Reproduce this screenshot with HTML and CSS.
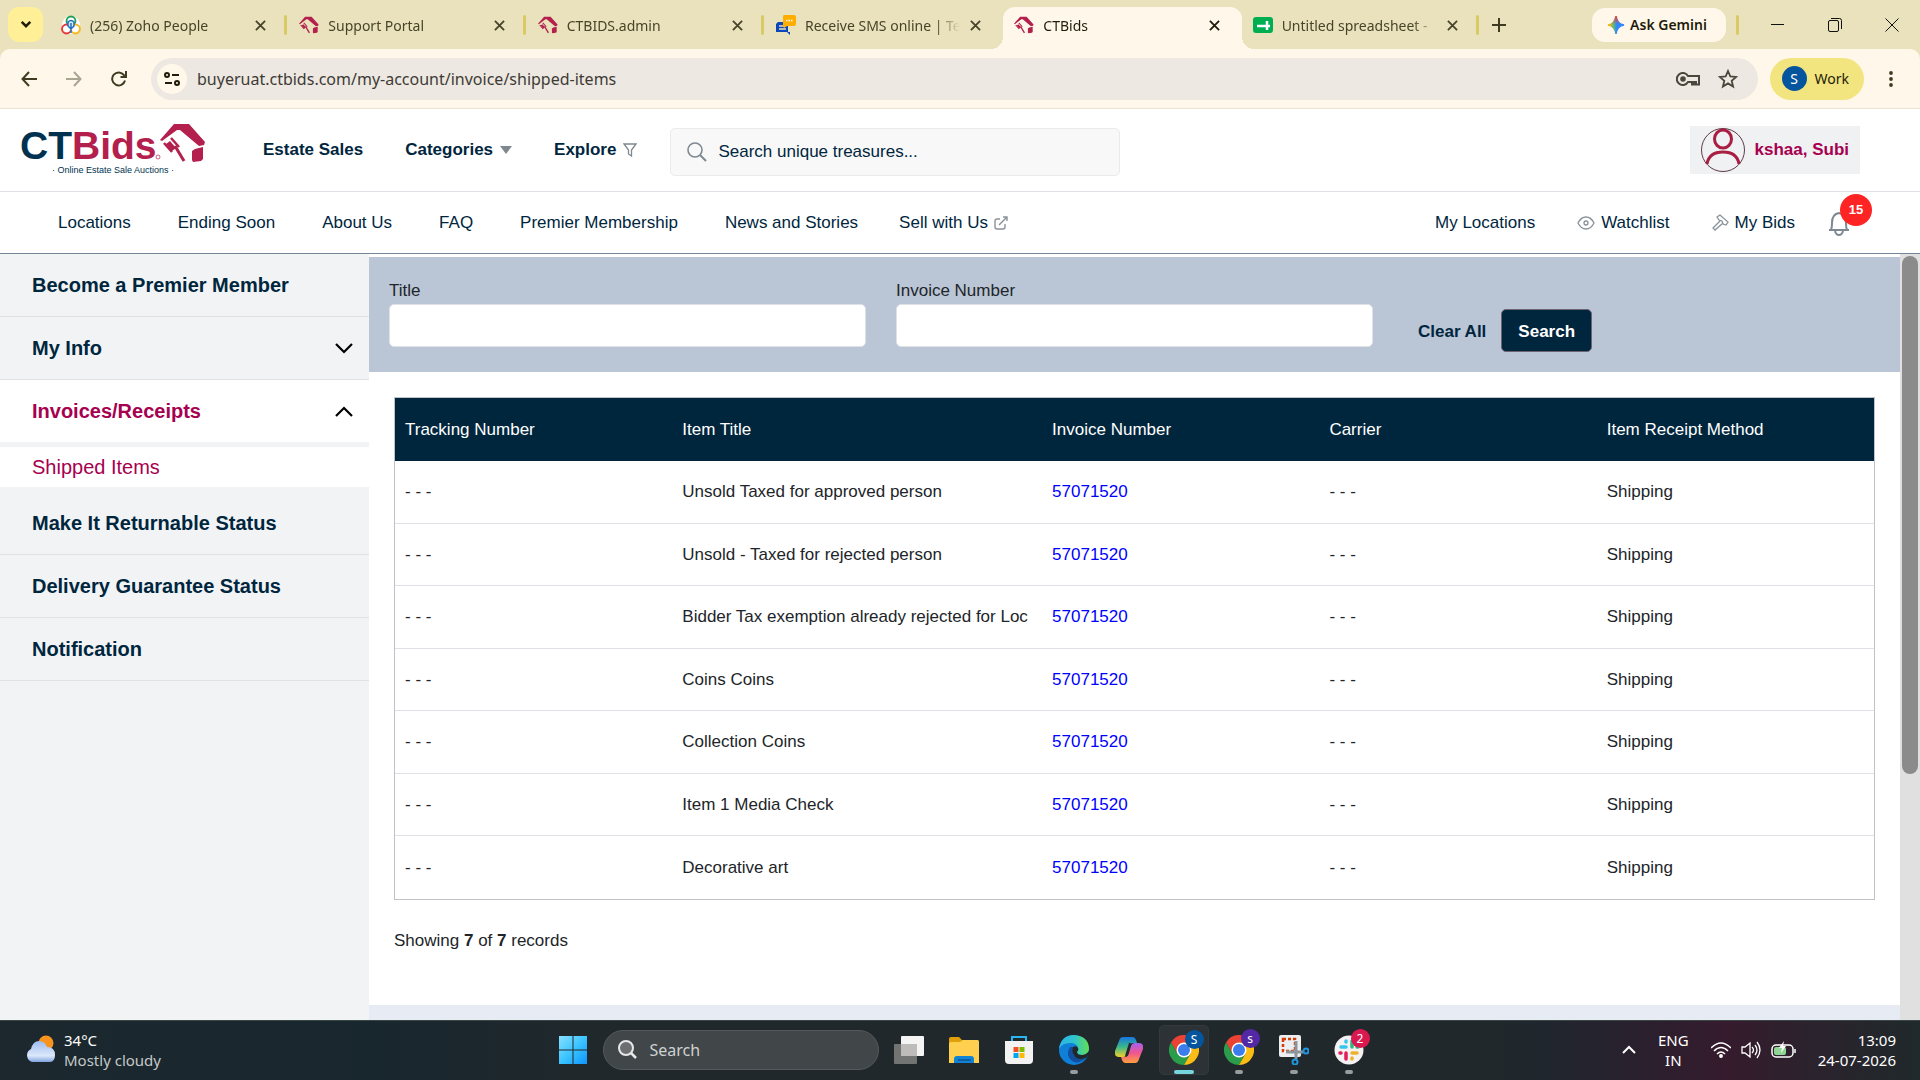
FILE: index.html
```html
<!DOCTYPE html>
<html lang="en">
<head>
    <meta charset="UTF-8">
    <title>CTBids</title>
    <link rel="stylesheet" href="styles.css">
</head>
<body>
<svg class="defs" width="0" height="0">
    <defs>
        <symbol id="house" viewBox="0 0 46 38">
            <path d="M14 0H29L45 18 44 21 39 22 20 6 17 6 2 17 0 16Z" fill="#b3204d"/>
            <path d="M32 27l3-2 8-2v12l-2 2-8 1-1-2Z" fill="#b3204d"/>
            <path d="M11 14l8 9M4 19l8 9" stroke="#b3204d" stroke-width="2.500" fill="none"/>
            <path d="M10 17l6 7-4 3-6-7Z" fill="#b3204d"/>
            <path d="M15 22l9 15" stroke="#b3204d" stroke-width="3" fill="none"/>
        </symbol>
        <symbol id="close" viewBox="0 0 12 12">
            <path d="M1 1l10 10M11 1L1 11" stroke="currentColor" stroke-width="2" fill="none"/>
        </symbol>
        <symbol id="chrome" viewBox="0 0 30 30">
            <path d="M2 7.500A15 15 0 0 1 28 7.500H15L8.500 18.800Z" fill="#ea4335"/>
            <path d="M2 7.500A15 15 0 0 0 15 30L21.500 18.800H8.500Z" fill="#2a9d4a"/>
            <path d="M28 7.500A15 15 0 0 1 15 30L21.500 18.800 15 7.500Z" fill="#fbbc14"/>
            <circle cx="15" cy="15" r="7.500" fill="#fff"/>
            <circle cx="15" cy="15" r="6" fill="#3b7ded"/>
        </symbol>
    </defs>
</svg>

<!-- browser -->
<div class="tabstrip">
    <button class="tab-search" aria-label="Search tabs">
        <svg width="12" height="9" viewBox="0 0 14 10"><path d="M2 2l5 5 5-5" stroke="#1f1c0a" stroke-width="3" fill="none"/></svg>
    </button>
    <div class="tabs">
        <div class="tab">
            <svg class="favicon" viewBox="0 0 20 20">
                <circle cx="10" cy="10" r="9" fill="#fff"/>
                <circle cx="10" cy="6" r="4.500" fill="none" stroke="#1fa05a" stroke-width="1.800"/>
                <circle cx="5.500" cy="14" r="4.500" fill="none" stroke="#e5343d" stroke-width="1.800"/>
                <circle cx="14.500" cy="14" r="4.500" fill="none" stroke="#f5b91c" stroke-width="1.800"/>
                <path d="M7 7q3-3 6 0v4l-3 3-3-3ZM10 8v10" fill="#d6e9fb" stroke="#1f6fc0" stroke-width="1.500"/>
            </svg>
            <span class="tab-title">(256) Zoho People</span>
            <button class="tab-close" aria-label="Close"><svg><use href="#close"/></svg></button>
        </div>
        <div class="tab">
            <svg class="favicon"><use href="#house"/></svg>
            <span class="tab-title">Support Portal</span>
            <button class="tab-close" aria-label="Close"><svg><use href="#close"/></svg></button>
        </div>
        <div class="tab">
            <svg class="favicon"><use href="#house"/></svg>
            <span class="tab-title">CTBIDS.admin</span>
            <button class="tab-close" aria-label="Close"><svg><use href="#close"/></svg></button>
        </div>
        <div class="tab no-line">
            <svg class="favicon" viewBox="0 0 20 20">
                <path d="M2 7h10v10h2v3l-3-3H0V9Z" fill="#0b47b8"/>
                <path d="M3 11h7M3 14h7" stroke="#e9e1bb" stroke-width="1.300"/>
                <path d="M8 0h10q2 0 2 2v7q0 2-2 2h-7l-3 2-1-2V2Q7 0 8 0Z" fill="#ffae00"/>
                <path d="M10 5.500h7" stroke="#fff" stroke-width="1.300" stroke-dasharray="1.500 1"/>
            </svg>
            <span class="tab-title">Receive SMS online | Te</span>
            <button class="tab-close" aria-label="Close"><svg><use href="#close"/></svg></button>
        </div>
        <div class="tab active">
            <svg class="favicon"><use href="#house"/></svg>
            <span class="tab-title">CTBids</span>
            <button class="tab-close" aria-label="Close"><svg><use href="#close"/></svg></button>
        </div>
        <div class="tab">
            <svg class="favicon" viewBox="0 0 20 20">
                <rect y="2" width="20" height="16" rx="3" fill="#00ae52"/>
                <path d="M4 11h13M14 6v9" stroke="#fff" stroke-width="2.500"/>
            </svg>
            <span class="tab-title">Untitled spreadsheet -</span>
            <button class="tab-close" aria-label="Close"><svg><use href="#close"/></svg></button>
        </div>
    </div>
    <button class="new-tab" aria-label="New tab">
        <svg width="14" height="14" viewBox="0 0 14 14"><path d="M7 0v14M0 7h14" stroke="#3f3c22" stroke-width="2"/></svg>
    </button>
    <button class="gemini">
        <svg width="18" height="20" viewBox="0 0 18 20">
            <defs>
                <linearGradient id="gem" x1="0" y1="0" x2="1" y2="0">
                    <stop offset=".1" stop-color="#f5b51d"/><stop offset=".35" stop-color="#5bb974"/><stop offset=".55" stop-color="#3186ff"/>
                </linearGradient>
                <linearGradient id="gem2" x1="0" y1="0" x2="0" y2="1">
                    <stop offset="0" stop-color="#f0433b"/><stop offset=".45" stop-color="#f0433b" stop-opacity="0"/>
                </linearGradient>
            </defs>
            <path d="M9 1Q10 9 17 10 10 11 9 19 8 11 1 10 8 9 9 1Z" fill="url(#gem)" stroke="url(#gem)" stroke-width="1.500"/>
            <path d="M9 1Q10 9 17 10 10 11 9 19 8 11 1 10 8 9 9 1Z" fill="url(#gem2)" stroke="url(#gem2)" stroke-width="1.500"/>
        </svg>
        Ask Gemini
    </button>
    <span class="strip-line"></span>
    <div class="win-buttons">
        <button aria-label="Minimize"><svg width="14" height="14" viewBox="0 0 14 14"><path d="M0 6.500h13" stroke="#111"/></svg></button>
        <button aria-label="Restore"><svg width="14" height="14" viewBox="0 0 14 14"><rect x=".5" y="2.500" width="10" height="11" rx="1.500" fill="none" stroke="#111"/><path d="M3 .5h8.500q2 0 2 2V11" fill="none" stroke="#111"/></svg></button>
        <button aria-label="Close window"><svg width="14" height="14" viewBox="0 0 14 14"><path d="M.5 .5l13 13M13.500 .5l-13 13" stroke="#111"/></svg></button>
    </div>
</div>
<div class="toolbar-wrap">
    <div class="toolbar">
        <button class="tool" aria-label="Back"><svg width="16" height="16" viewBox="0 0 16 16"><path d="M16 8H2M8 1L1.500 8 8 15" stroke="#3f3c22" stroke-width="2" fill="none"/></svg></button>
        <button class="tool" aria-label="Forward"><svg width="16" height="16" viewBox="0 0 16 16"><path d="M0 8h14M8 1l6.500 7L8 15" stroke="#a9a593" stroke-width="2" fill="none"/></svg></button>
        <button class="tool" aria-label="Reload"><svg width="16" height="16" viewBox="0 0 16 16"><path d="M14 9.500A6.500 6.500 0 1 1 13 4.200L15 6M15 0v6H9.500" stroke="#3f3c22" stroke-width="2" fill="none"/></svg></button>
        <div class="address">
            <button class="site-info" aria-label="Site information">
                <svg width="16" height="16" viewBox="0 0 16 16" fill="none" stroke="#1f1c0a" stroke-width="2"><circle cx="3" cy="4" r="2"/><path d="M8 4h7M1 12h7"/><circle cx="13" cy="12" r="2"/></svg>
            </button>
            <input class="url" type="text" aria-label="Address" value="buyeruat.ctbids.com/my-account/invoice/shipped-items">
            <button class="addr-btn" aria-label="Passwords">
                <svg width="24" height="14" viewBox="0 0 24 14" fill="none" stroke="#4a473c" stroke-width="2"><path d="M12 4a6 6 0 1 0 0 6h4v2.500h2V10h2v2.500h3V4Z"/><circle cx="7" cy="7" r="1.800" fill="#4a473c"/></svg>
            </button>
            <button class="addr-btn" aria-label="Bookmark">
                <svg width="20" height="20" viewBox="0 0 20 20"><path d="M10 2l2.300 5.400 5.900.5-4.500 3.900 1.400 5.700L10 14.400l-5.100 3.100 1.400-5.700L1.800 7.900l5.900-.5Z" fill="none" stroke="#4a473c" stroke-width="1.800"/></svg>
            </button>
        </div>
        <button class="profile"><span class="profile-pic">S</span>Work</button>
        <button class="tool menu" aria-label="Menu"><svg width="4" height="16" viewBox="0 0 4 16" fill="#3f3c22"><circle cx="2" cy="2" r="1.900"/><circle cx="2" cy="8" r="1.900"/><circle cx="2" cy="14" r="1.900"/></svg></button>
    </div>
</div>

<!-- site header -->
<header class="header">
    <a class="logo" href="#" aria-label="CTBids">
        <svg width="190" height="56" viewBox="0 0 190 56">
            <text class="logo-name" x="-1" y="37" fill="#00324f">CT</text>
            <text class="logo-name" x="51" y="37" fill="#b3204d">Bids</text>
            <circle cx="137" cy="35" r="2" fill="none" stroke="#b3204d" stroke-width=".7"/>
            <text class="logo-tag" x="92" y="51" text-anchor="middle" fill="#00324f">· Online Estate Sale Auctions ·</text>
            <use href="#house" x="139" y="2" width="46" height="38"/>
        </svg>
    </a>
    <nav class="main-nav">
        <a href="#">Estate Sales</a>
        <a href="#">Categories <svg width="12" height="8" viewBox="0 0 12 8"><path d="M0 0h12L6 8Z" fill="#7f8890"/></svg></a>
        <a href="#">Explore <svg width="14" height="14" viewBox="0 0 14 14"><path d="M1 1h12L8.500 7v6L5.500 11V7Z" fill="none" stroke="#7f8890" stroke-width="1.300"/></svg></a>
    </nav>
    <label class="site-search">
        <svg width="20" height="20" viewBox="0 0 20 20"><circle cx="8" cy="8" r="7" fill="none" stroke="#7f8890" stroke-width="1.600"/><path d="M13 13l6 6" stroke="#7f8890" stroke-width="2"/></svg>
        <input type="text" placeholder="Search unique treasures..." aria-label="Search unique treasures">
    </label>
    <button class="user">
        <svg width="44" height="44" viewBox="0 0 44 44">
            <circle cx="22" cy="22" r="21.500" fill="none" stroke="#5f3a48"/>
            <ellipse cx="22" cy="11" rx="8.500" ry="9" fill="none" stroke="#a91f43" stroke-width="3"/>
            <path d="M6 36Q8 24 22 24T38 36" fill="none" stroke="#a91f43" stroke-width="3"/>
        </svg>
        kshaa, Subi
    </button>
</header>
<nav class="sub-nav">
    <div class="sub-left">
        <a href="#">Locations</a>
        <a href="#">Ending Soon</a>
        <a href="#">About Us</a>
        <a href="#">FAQ</a>
        <a href="#">Premier Membership</a>
        <a href="#">News and Stories</a>
        <a class="sell" href="#">Sell with Us <svg width="14" height="14" viewBox="0 0 14 14" fill="none" stroke="#8a9299" stroke-width="1.400"><path d="M6 3H3Q1 3 1 5v6q0 2 2 2h6q2 0 2-2V8M5 9l8-8M9 1h4v4"/></svg></a>
    </div>
    <div class="sub-right">
        <a href="#">My Locations</a>
        <a href="#"><svg width="18" height="14" viewBox="0 0 18 14" fill="none" stroke="#8a9299" stroke-width="1.300"><path d="M1 7q3-6 8-6t8 6q-3 6-8 6T1 7Z"/><circle cx="9" cy="7" r="2"/></svg>Watchlist</a>
        <a class="bids" href="#"><svg width="17" height="17" viewBox="0 0 17 17" fill="none" stroke="#8a9299" stroke-width="1.300"><path d="M5 3l3-2 8 7-2 3-3-1-1-3-3-1ZM8 7l-7 7 2 2 8-7"/></svg>My Bids</a>
        <a class="bell" href="#" aria-label="Notifications">
            <svg width="22" height="26" viewBox="0 0 22 26" fill="none" stroke="#7f8890" stroke-width="2"><path d="M1 20h20M3 20q1-2 1-7 0-9 7-10 7 1 7 10 0 5 1 7M7 21q1 4 4 4t4-4"/></svg>
            <span class="badge">15</span>
        </a>
    </div>
</nav>

<div class="page">
    <aside class="sidebar">
        <a class="side-item" href="#">Become a Premier Member</a>
        <a class="side-item" href="#">My Info <svg width="18" height="11" viewBox="0 0 18 11"><path d="M1 1l8 8 8-8" stroke="#000" stroke-width="2.200" fill="none"/></svg></a>
        <a class="side-item open" href="#">Invoices/Receipts <svg width="18" height="11" viewBox="0 0 18 11"><path d="M1 10l8-8 8 8" stroke="#000" stroke-width="2.200" fill="none"/></svg></a>
        <a class="side-sub" href="#">Shipped Items</a>
        <a class="side-item" href="#">Make It Returnable Status</a>
        <a class="side-item" href="#">Delivery Guarantee Status</a>
        <a class="side-item" href="#">Notification</a>
    </aside>
    <main class="content">
        <form class="filter">
            <div class="field">
                <label for="title">Title</label>
                <input type="text" id="title">
            </div>
            <div class="field">
                <label for="invoice">Invoice Number</label>
                <input type="text" id="invoice">
            </div>
            <div class="actions">
                <button type="reset" class="clear">Clear All</button>
                <button type="button" class="search">Search</button>
            </div>
        </form>
        <div class="results">
            <table class="items">
                <thead>
                <tr><th>Tracking Number</th><th class="wide">Item Title</th><th>Invoice Number</th><th>Carrier</th><th>Item Receipt Method</th></tr>
                </thead>
                <tbody>
                <tr><td>- - -</td><td>Unsold Taxed for approved person</td><td><a href="#">57071520</a></td><td>- - -</td><td>Shipping</td></tr>
                <tr><td>- - -</td><td>Unsold - Taxed for rejected person</td><td><a href="#">57071520</a></td><td>- - -</td><td>Shipping</td></tr>
                <tr><td>- - -</td><td>Bidder Tax exemption already rejected for Loc</td><td><a href="#">57071520</a></td><td>- - -</td><td>Shipping</td></tr>
                <tr><td>- - -</td><td>Coins Coins</td><td><a href="#">57071520</a></td><td>- - -</td><td>Shipping</td></tr>
                <tr><td>- - -</td><td>Collection Coins</td><td><a href="#">57071520</a></td><td>- - -</td><td>Shipping</td></tr>
                <tr><td>- - -</td><td>Item 1 Media Check</td><td><a href="#">57071520</a></td><td>- - -</td><td>Shipping</td></tr>
                <tr><td>- - -</td><td>Decorative art</td><td><a href="#">57071520</a></td><td>- - -</td><td>Shipping</td></tr>
                </tbody>
            </table>
            <p class="count">Showing <b>7</b> of <b>7</b> records</p>
        </div>
        <div class="footer-edge"></div>
    </main>
    <div class="scrollbar"><div class="thumb"></div></div>
</div>

<!-- taskbar -->
<footer class="taskbar">
    <button class="weather">
        <svg width="30" height="30" viewBox="0 0 30 30">
            <defs><linearGradient id="cloud" x1="0" y1="0" x2="0" y2="1"><stop offset="0" stop-color="#9dbcf0"/><stop offset=".7" stop-color="#dce8fa"/><stop offset="1" stop-color="#7ea2e0"/></linearGradient></defs>
            <circle cx="21" cy="8" r="7.500" fill="#f7931e"/>
            <path d="M7 27a7 7 0 0 1-1-13Q8 6 14 6q6 0 8 6 8 0 8 8t-7 7Z" fill="url(#cloud)"/>
        </svg>
        <span class="weather-text"><span>34°C</span><span class="dim">Mostly cloudy</span></span>
    </button>
    <div class="apps">
        <button class="app" aria-label="Start">
            <svg width="30" height="30" viewBox="0 0 30 30">
                <defs><linearGradient id="win" x1="0" y1="0" x2="30" y2="30" gradientUnits="userSpaceOnUse"><stop offset="0" stop-color="#8ce3ff"/><stop offset=".5" stop-color="#3cc4ff"/><stop offset="1" stop-color="#0a92fb"/></linearGradient></defs>
                <path d="M1 1h13.500v13.500H1ZM15.500 1H29v13.500H15.500ZM1 15.500h13.500V29H1ZM15.500 15.500H29V29H15.500Z" fill="url(#win)"/>
            </svg>
        </button>
        <label class="task-search">
            <svg width="19" height="19" viewBox="0 0 19 19"><circle cx="8" cy="8" r="7" fill="#6b6f72" stroke="#e8e8e8" stroke-width="2"/><path d="M13 13l5 5" stroke="#e8e8e8" stroke-width="2.500"/></svg>
            <input type="text" placeholder="Search" aria-label="Search Windows">
        </label>
        <button class="app" aria-label="Task view">
            <svg width="30" height="30" viewBox="0 0 30 30"><rect x="7" y="1" width="23" height="20" rx="1" fill="#f4f4f4"/><rect y="9" width="23" height="20" rx="1" fill="#8d8c8b" opacity=".75"/><path d="M7 9h16v12H7Z" fill="#bdbcbb"/></svg>
        </button>
        <button class="app" aria-label="File Explorer">
            <svg width="30" height="30" viewBox="0 0 30 30">
                <path d="M0 4q0-2 2-2h8l3 3h15q2 0 2 2v6H0Z" fill="#e0a00c"/>
                <path d="M0 9q0-2 2-2h9l3-2h14q2 0 2 2v21H0Z" fill="#ffd04f"/>
                <path d="M5 28v-4q0-3 3-3h14q3 0 3 3v4Z" fill="#1182d4"/><path d="M9 25h13" stroke="#0a5596" stroke-width="1.500"/>
            </svg>
        </button>
        <button class="app" aria-label="Microsoft Store">
            <svg width="30" height="30" viewBox="0 0 30 30">
                <path d="M8 6V2h14v4" fill="none" stroke="#28b5f0" stroke-width="2"/>
                <path d="M1 6h28v19q0 4-4 4H5q-4 0-4-4Z" fill="#f2f2f2"/>
                <path d="M9.500 12h5v5h-5Z" fill="#f25022"/><path d="M15.500 12h5v5h-5Z" fill="#7fba00"/><path d="M9.500 18h5v5h-5Z" fill="#00a4ef"/><path d="M15.500 18h5v5h-5Z" fill="#ffb900"/>
            </svg>
        </button>
        <button class="app running" aria-label="Edge">
            <svg width="30" height="30" viewBox="0 0 30 30">
                <defs>
                    <linearGradient id="edge1"><stop offset="0" stop-color="#2bb4e8"/><stop offset=".5" stop-color="#2fc4cf"/><stop offset="1" stop-color="#62df51"/></linearGradient>
                </defs>
                <circle cx="15" cy="15" r="15" fill="#0f7fd7"/>
                <path d="M0 14Q2 0 15 0q14 1 15 13 0 7-7 7-5 0-5-3 2-2 1-4-1-5-8-5-8 0-11 6Z" fill="url(#edge1)"/>
                <path d="M11 12q-5 8 2 14 6 4 14-3-8 3-12-3-3-4-1-8Z" fill="#134f9f"/>
                <path d="M14 12q4-2 5 1 1 2-1 4 0 3 5 3 4 0 7-4l1 3-4 4q-9 3-12-3-3-4-1-8Z" fill="#20282c"/>
            </svg>
        </button>
        <button class="app" aria-label="Copilot">
            <svg width="28" height="26" viewBox="0 0 28 26">
                <defs>
                    <linearGradient id="cop1" x1="0" y1="0" x2="0" y2="1"><stop offset="0" stop-color="#1677e0"/><stop offset=".5" stop-color="#3ab889"/><stop offset="1" stop-color="#f4d128"/></linearGradient>
                    <linearGradient id="cop2" x1="0" y1="0" x2="0" y2="1"><stop offset="0" stop-color="#a561f0"/><stop offset=".5" stop-color="#f0558e"/><stop offset="1" stop-color="#ff9f3d"/></linearGradient>
                </defs>
                <path d="M8 0h10q2 0 3 3l1 3h-4q-3 0-4 4l-2 7q-1 3-4 3H4q-5 0-4-6L4 4Q5 0 8 0Z" fill="url(#cop1)"/>
                <path d="M20 26H10q-2 0-3-3l-1-3h4q3 0 4-4l2-7q1-3 4-3h4q5 0 4 6l-4 10q-1 4-4 4Z" fill="url(#cop2)"/>
                <path d="M15 6l-4 13" stroke="#20282c" stroke-width="2"/>
            </svg>
        </button>
        <button class="app running current" aria-label="Chrome, Work"><svg width="30" height="30"><use href="#chrome"/></svg><span class="app-badge blue">S</span></button>
        <button class="app running" aria-label="Chrome"><svg width="30" height="30"><use href="#chrome"/></svg><span class="app-badge purple">s</span></button>
        <button class="app running" aria-label="Snipping Tool">
            <svg width="30" height="30" viewBox="0 0 30 30">
                <rect width="22" height="22" rx="2" fill="#eceff1"/>
                <rect x="4" y="4" width="12" height="12" fill="none" stroke="#d83b01" stroke-width="2.500" stroke-dasharray="3 2"/>
                <path d="M17 6v18M7 17h17" stroke="#8b959c" stroke-width="3"/>
                <circle cx="27" cy="16" r="2.500" fill="none" stroke="#1f97e0" stroke-width="2"/><circle cx="16" cy="27" r="2.500" fill="none" stroke="#1f97e0" stroke-width="2"/>
            </svg>
        </button>
        <button class="app running" aria-label="Slack">
            <svg width="30" height="30" viewBox="0 0 30 30">
                <circle cx="15" cy="15" r="14.500" fill="#f4f2f3"/>
                <g fill="none" stroke-width="3.500" stroke-linecap="round">
                    <path d="M7 12h5M12 6v1" stroke="#36c5f0"/><path d="M18 6v6M23 12h1" stroke="#2eb67d"/><path d="M18 18h5M18 23v1" stroke="#ecb22e"/><path d="M12 18v6M6 18h1" stroke="#e01e5a"/>
                </g>
            </svg>
            <span class="app-badge red">2</span>
        </button>
    </div>
    <div class="tray">
        <button aria-label="Hidden icons"><svg width="14" height="9" viewBox="0 0 14 9"><path d="M1 8l6-6 6 6" stroke="#fff" stroke-width="2" fill="none"/></svg></button>
        <button class="lang"><span>ENG</span><span>IN</span></button>
        <button class="status" aria-label="Network, volume, battery">
            <svg width="20" height="16" viewBox="0 0 20 16" fill="none" stroke="#fff" stroke-width="1.500"><path d="M0 6q10-10 20 0M3 9q7-7 14 0M6 12q4-4 8 0"/><circle cx="10" cy="14" r="1.200" fill="#fff"/></svg>
            <svg width="20" height="18" viewBox="0 0 20 18" fill="none" stroke="#fff" stroke-width="1.300"><path d="M1 6h3l5-4v14l-5-4H1ZM11 6q3 3 0 6M14 4q4 5 0 10M16 1q6 8 0 16"/></svg>
            <svg width="25" height="17" viewBox="0 0 25 17"><rect x="1" y="4" width="21" height="12" rx="4" fill="none" stroke="#fff" stroke-width="1.500"/><path d="M24 8v4" stroke="#fff" stroke-width="1.500"/><rect x="3" y="6" width="12" height="8" rx="2" fill="#8fd694"/><path d="M13 0L8 7h3l-1 5 5-7h-3Z" fill="#fff"/></svg>
        </button>
        <button class="clock"><span>13:09</span><span>24-07-2026</span></button>
    </div>
</footer>
</body>
</html>
```

FILE: styles.css
```css
* {
    box-sizing: border-box;
    margin: 0;
    padding: 0;
}

body {
    display: flex;
    flex-direction: column;
    height: 100vh;
    overflow: hidden;
    font-family: "Liberation Sans", Arial, sans-serif;
    font-size: 17px;
    color: #212529;
    background: #fff;
}

a {
    color: inherit;
    text-decoration: none;
}

button {
    border: 0;
    background: none;
    font: inherit;
    color: inherit;
    cursor: pointer;
}

input {
    border: 0;
    outline: 0;
    background: none;
    font: inherit;
    color: inherit;
}

svg {
    flex: none;
    display: block;
}

.defs {
    position: absolute;
}

/* browser */
.tabstrip,
.toolbar-wrap {
    background: #eae2bc;
    font-family: "Noto Sans", sans-serif;
    font-size: 14px;
    color: #47442a;
}

.tabstrip {
    display: flex;
    align-items: center;
    height: 49px;
    padding-left: 8px;
}

.tab-search {
    display: flex;
    align-items: center;
    justify-content: center;
    width: 35px;
    height: 35px;
    margin-right: 7px;
    border-radius: 11px;
    background: #fff098;
}

.tabs {
    display: flex;
    flex: 1;
    align-self: stretch;
    padding-top: 7px;
}

.tab {
    position: relative;
    display: flex;
    flex: 1;
    align-items: center;
    min-width: 0;
    padding: 0 17px 6px 11px;
}

.tab::after {
    content: "";
    position: absolute;
    right: 1px;
    top: 8px;
    width: 3px;
    height: 20px;
    border-radius: 2px;
    background: #d8cb65;
}

.tab.no-line::after {
    display: none;
}

.favicon {
    width: 20px;
    height: 20px;
    margin-right: 9px;
}

.tab-title {
    flex: 1;
    min-width: 0;
    white-space: nowrap;
    -webkit-mask-image: linear-gradient(to right, #000 130px, transparent 155px);
    mask-image: linear-gradient(to right, #000 130px, transparent 155px);
}

.tab-close {
    padding: 5px;
    margin-left: 3px;
}

.tab-close svg {
    width: 11px;
    height: 11px;
}

.tab.active {
    border-radius: 12px 12px 0 0;
    background: #fff8ea;
    color: #1f1c0a;
}

.tab.active::before,
.tab.active::after {
    content: "";
    position: absolute;
    top: auto;
    bottom: 0;
    width: 12px;
    height: 12px;
    border-radius: 0;
}

.tab.active::before {
    left: -12px;
    background: radial-gradient(circle at 0 0, transparent 12px, #fff8ea 12px);
}

.tab.active::after {
    right: -12px;
    background: radial-gradient(circle at 100% 0, transparent 12px, #fff8ea 12px);
}

.new-tab {
    padding: 7px;
    margin: 0 79px 0 5px;
}

.gemini {
    display: flex;
    align-items: center;
    justify-content: center;
    gap: 5px;
    width: 134px;
    height: 34px;
    padding-right: 4px;
    border-radius: 13px;
    background: #fff8ea;
    color: #1f1c0a;
    font-weight: 600;
}

.strip-line {
    width: 3px;
    height: 20px;
    margin: 0 10px;
    border-radius: 2px;
    background: #d8cb65;
}

.win-buttons {
    display: flex;
}

.win-buttons button {
    display: flex;
    justify-content: center;
    width: 57px;
}

.toolbar {
    display: flex;
    align-items: center;
    height: 60px;
    padding: 0 7px 0 6px;
    border-bottom: 1px solid #e9e4d2;
    border-radius: 10px 10px 0 0;
    background: #fff8ea;
}

.tool {
    display: flex;
    justify-content: center;
    width: 45px;
}

.menu {
    margin-left: 4px;
}

.address {
    display: flex;
    flex: 1;
    align-items: center;
    height: 42px;
    margin: 0 12px 0 10px;
    padding: 0 20px 0 6px;
    border-radius: 21px;
    background: #ede8e1;
}

.site-info {
    display: flex;
    align-items: center;
    justify-content: center;
    width: 30px;
    height: 30px;
    border-radius: 50%;
    background: #fff8ea;
}

.url {
    flex: 1;
    padding-left: 10px;
    font-size: 16px;
    color: #3d3b36;
}

.addr-btn {
    margin-left: 18px;
}

.profile {
    display: flex;
    align-items: center;
    gap: 8px;
    height: 42px;
    padding: 0 15px 0 12px;
    border-radius: 21px;
    background: #f2e47e;
    color: #1f1c0a;
}

.profile-pic {
    width: 25px;
    border-radius: 50%;
    background: #05559e;
    color: #fff;
    line-height: 25px;
    text-align: center;
}

/* header */
.header {
    display: flex;
    align-items: center;
    height: 83px;
    padding: 0 60px 0 21px;
    border-bottom: 1px solid #dee2e6;
    color: #00263e;
}

.logo-name {
    font-size: 39px;
    font-weight: bold;
}

.logo-tag {
    font-size: 9px;
}

.main-nav {
    display: flex;
    gap: 42px;
    margin-left: 52px;
    font-weight: bold;
}

.main-nav a {
    display: flex;
    align-items: center;
    gap: 7px;
}

.site-search {
    display: flex;
    align-items: center;
    gap: 11px;
    width: 450px;
    height: 48px;
    margin: 3px auto 0 33px;
    padding: 0 16px;
    border: 1px solid #ebebeb;
    border-radius: 5px;
    background: #f8f8f8;
}

.site-search input {
    flex: 1;
}

.site-search input::placeholder {
    color: #00263e;
}

.user {
    display: flex;
    align-items: center;
    gap: 10px;
    height: 48px;
    padding: 0 11px;
    background: #f0f1f3;
    color: #a6004f;
    font-weight: bold;
}

.sub-nav {
    display: flex;
    justify-content: space-between;
    height: 62px;
    padding: 0 70px 0 58px;
    border-bottom: 1px solid #75869a;
    color: #00263e;
}

.sub-left,
.sub-right {
    display: flex;
    align-items: center;
    gap: 47px;
}

.sub-nav a {
    display: flex;
    align-items: center;
    gap: 6px;
}

.sub-nav .sell {
    margin-left: -6px;
}

.sub-right {
    gap: 42px;
}

.sub-right .bell {
    position: relative;
    margin-left: -9px;
}

.badge {
    position: absolute;
    left: 12px;
    top: -16px;
    width: 32px;
    border-radius: 50%;
    background: #ff2424;
    color: #fff;
    font-size: 13px;
    font-weight: bold;
    line-height: 32px;
    text-align: center;
}

/* page */
.page {
    display: flex;
    flex: 1;
    min-height: 0;
}

.sidebar {
    width: 369px;
    background: #f1f3f5;
    color: #00263e;
    font-size: 20px;
}

.side-item {
    display: flex;
    align-items: center;
    justify-content: space-between;
    height: 63px;
    padding: 0 16px 0 32px;
    border-bottom: 1px solid #dee2e6;
    font-weight: bold;
}

.side-item.open {
    height: 62px;
    border: 0;
    background: #fff;
    color: #a6004f;
}

.side-sub {
    display: block;
    margin: 5px 0;
    padding-left: 32px;
    background: #fff;
    color: #a6004f;
    line-height: 40px;
}

.content {
    display: flex;
    flex: 1;
    flex-direction: column;
    padding-top: 3px;
}

.filter {
    display: grid;
    grid-template-columns: repeat(3, 1fr);
    padding: 23px 5px 25px;
    background: #bac5d6;
}

.field {
    padding: 0 15px;
}

.field label {
    display: block;
    padding-bottom: 2px;
    line-height: 22px;
}

.field input {
    display: block;
    width: 100%;
    height: 43px;
    padding: 0 12px;
    border: 1px solid #dee2e6;
    border-radius: 5px;
    background: #fff;
}

.actions {
    display: flex;
    align-items: flex-end;
    gap: 15px;
    padding-left: 30px;
    margin-bottom: -5px;
    color: #00263e;
    font-weight: bold;
}

.actions button {
    height: 43px;
    padding-top: 2px;
}

.actions .search {
    padding: 2px 16px 0;
    border: 1px solid #6c6470;
    border-radius: 5px;
    background: #00263e;
    color: #fff;
}

.results {
    flex: 1;
    padding: 25px;
}

.items {
    width: 100%;
    border: 1px solid #bfc3c7;
    border-spacing: 0;
    table-layout: fixed;
}

.items th,
.items td {
    height: 63px;
    padding: 0 10px;
    text-align: left;
    white-space: nowrap;
}

.items th {
    width: 18.75%;
    background: #00263e;
    color: #fff;
    font-weight: normal;
}

.items .wide {
    width: 25%;
}

.items td {
    border-bottom: 1px solid #dee2e6;
}

.items tr:nth-child(even) td {
    height: 62px;
}

.items tr:last-child td {
    border-bottom: 0;
}

.items a {
    color: #0000ff;
}

.count {
    margin-top: 31px;
}

.footer-edge {
    height: 15px;
    background: #e7ecf4;
}

.scrollbar {
    width: 20px;
    padding: 2px;
    background: #e0e0e0;
}

.thumb {
    height: 68%;
    border-radius: 8px;
    background: #8b8b8b;
}

/* taskbar */
.taskbar {
    display: grid;
    grid-template-columns: 1fr auto 1fr;
    align-items: center;
    height: 60px;
    padding: 0 24px 2px 25px;
    border-top: 1px solid #3b4745;
    background: linear-gradient(to right, #1c282e 0, #18262e 20%, #20282c 30%, #20282c 78%, #20252e 81%, #351b2d 90%, #2c222d 94%, #1f292b 100%);
    color: #fff;
    font-family: "Noto Sans", sans-serif;
    font-size: 15px;
    line-height: 20px;
}

.weather {
    display: flex;
    align-items: center;
    gap: 9px;
    text-align: left;
}

.weather-text span,
.lang span,
.clock span {
    display: block;
}

.dim {
    color: #c4c8ca;
}

.apps {
    display: flex;
    align-items: center;
    gap: 5px;
}

.app {
    position: relative;
    display: flex;
    align-items: center;
    justify-content: center;
    width: 50px;
    height: 50px;
    border-radius: 5px;
}

.app.running::after {
    content: "";
    position: absolute;
    left: 21px;
    bottom: 1px;
    width: 8px;
    height: 4px;
    border-radius: 2px;
    background: #999c9e;
}

.app.current {
    border: 1px solid #34393c;
    background: #2c3235;
}

.app.current::after {
    left: 14px;
    bottom: 0;
    width: 20px;
    background: #76d5dc;
}

.app-badge {
    position: absolute;
    right: 4px;
    top: 4px;
    width: 19px;
    border-radius: 50%;
    font-size: 12px;
    line-height: 19px;
}

.blue {
    background: #05559e;
}

.purple {
    background: #5328a5;
}

.red {
    background: #d9184f;
}

.task-search {
    display: flex;
    align-items: center;
    gap: 13px;
    width: 276px;
    height: 40px;
    padding: 0 14px;
    border: 1px solid #55595b;
    border-radius: 20px;
    background: #414649;
    font-size: 16px;
}

.task-search input {
    flex: 1;
    min-width: 0;
}

.task-search input::placeholder {
    color: #cfd1d2;
}

.tray {
    display: flex;
    align-items: center;
    justify-content: flex-end;
    gap: 22px;
}

.status {
    display: flex;
    align-items: center;
    gap: 10px;
}

.lang {
    text-align: center;
}

.clock {
    text-align: right;
}
```
